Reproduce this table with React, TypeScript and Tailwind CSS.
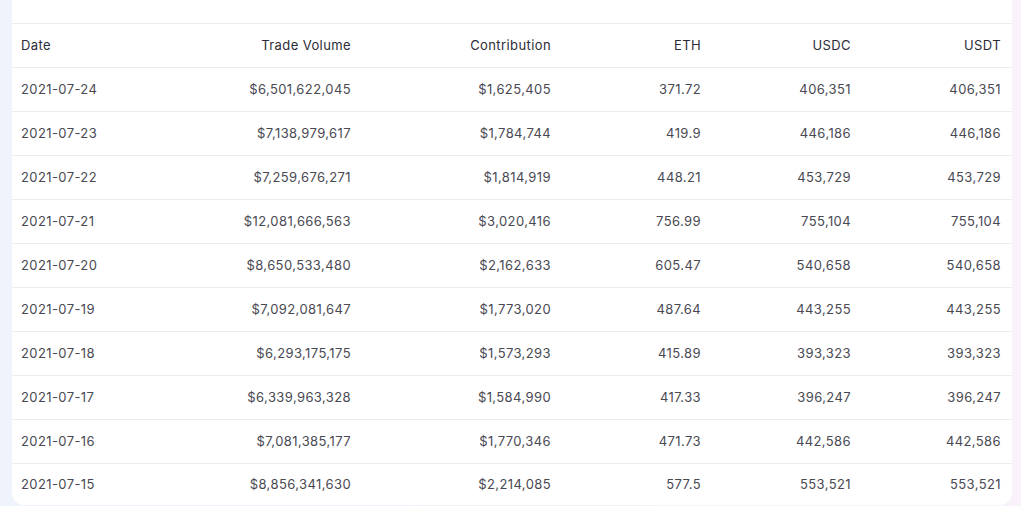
const ROWS = [
  ["2021-07-24", "$6,501,622,045", "$1,625,405", "371.72", "406,351", "406,351"],
  ["2021-07-23", "$7,138,979,617", "$1,784,744", "419.9", "446,186", "446,186"],
  ["2021-07-22", "$7,259,676,271", "$1,814,919", "448.21", "453,729", "453,729"],
  ["2021-07-21", "$12,081,666,563", "$3,020,416", "756.99", "755,104", "755,104"],
  ["2021-07-20", "$8,650,533,480", "$2,162,633", "605.47", "540,658", "540,658"],
  ["2021-07-19", "$7,092,081,647", "$1,773,020", "487.64", "443,255", "443,255"],
  ["2021-07-18", "$6,293,175,175", "$1,573,293", "415.89", "393,323", "393,323"],
  ["2021-07-17", "$6,339,963,328", "$1,584,990", "417.33", "396,247", "396,247"],
  ["2021-07-16", "$7,081,385,177", "$1,770,346", "471.73", "442,586", "442,586"],
  ["2021-07-15", "$8,856,341,630", "$2,214,085", "577.5", "553,521", "553,521"],
];

const COLS = [
  { label: "Date", w: "w-[150px]", align: "justify-start" },
  { label: "Trade Volume", w: "w-[200px]", align: "justify-end" },
  { label: "Contribution", w: "w-[200px]", align: "justify-end" },
  { label: "ETH", w: "w-[150px]", align: "justify-end" },
  { label: "USDC", w: "w-[150px]", align: "justify-end" },
  { label: "USDT", w: "w-[150px]", align: "justify-end" },
];

export default function App() {
  return (
    <div className="h-[506px] overflow-hidden bg-[linear-gradient(90deg,#eef3fc,#f3f2fb_60%,#f9f2fb)] pl-[12px] font-['Inter',sans-serif] text-[13px] tracking-[0.4px]">
      <div className="w-[1000px] overflow-hidden rounded-b-xl bg-white">
        <div className="h-[24px] border-b border-[#ececf2]" />

        {/* header */}
        <div className="flex h-[44px] border-b border-[#ececf2] text-[#2c2c38]">
          {COLS.map((c) => (
            <div key={c.label} className={`flex items-center pl-[9px] pr-[11px] ${c.w} ${c.align}`}>
              {c.label}
            </div>
          ))}
        </div>

        {ROWS.map((r, i) => (
          <div
            key={r[0]}
            className={`flex text-[#494953] ${i === ROWS.length - 1 ? "h-[41px]" : "h-[44px] border-b border-[#ececf2]"}`}
          >
            {r.map((v, j) => (
              <div key={j} className={`flex items-center pl-[9px] pr-[11px] ${COLS[j].w} ${COLS[j].align}`}>
                {v}
              </div>
            ))}
          </div>
        ))}
      </div>
    </div>
  );
}
